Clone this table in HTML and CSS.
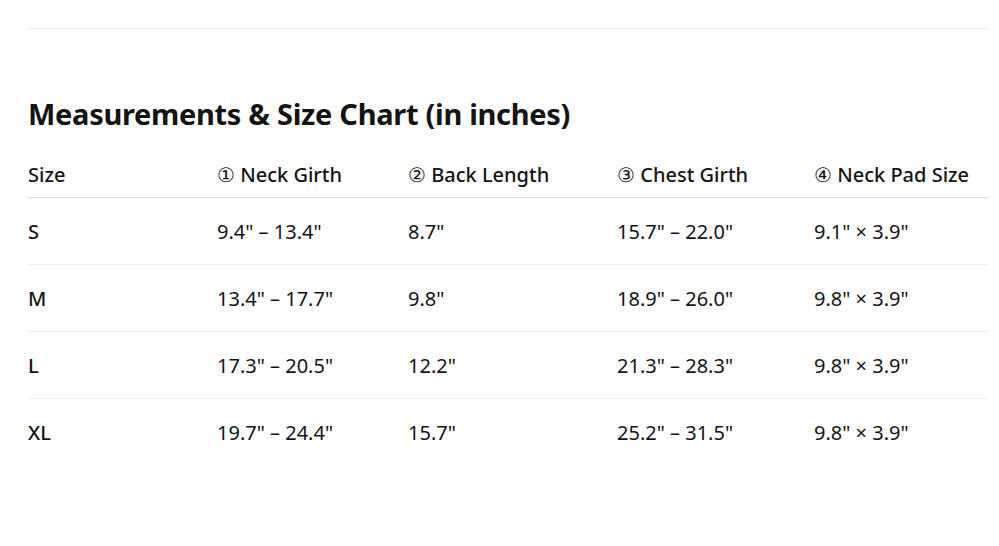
FILE: index.html
```html
<!DOCTYPE html>
<html lang="en">
<head>
<meta charset="utf-8">
<title>Measurements &amp; Size Chart</title>
<link rel="stylesheet" href="styles.css">
</head>
<body>
<main class="page">
  <hr class="divider">
  <h1 class="title">Measurements &amp; Size Chart (in inches)</h1>
  <table class="chart">
    <colgroup>
      <col class="c-size"><col class="c-neck"><col class="c-back"><col class="c-chest"><col class="c-pad">
    </colgroup>
    <thead>
      <tr>
        <th>Size</th>
        <th>&#x2460; Neck Girth</th>
        <th>&#x2461; Back Length</th>
        <th>&#x2462; Chest Girth</th>
        <th>&#x2463; Neck Pad Size</th>
      </tr>
    </thead>
    <tbody>
      <tr><td class="size">S</td><td>9.4" – 13.4"</td><td>8.7"</td><td>15.7" – 22.0"</td><td>9.1" × 3.9"</td></tr>
      <tr><td class="size">M</td><td>13.4" – 17.7"</td><td>9.8"</td><td>18.9" – 26.0"</td><td>9.8" × 3.9"</td></tr>
      <tr><td class="size">L</td><td>17.3" – 20.5"</td><td>12.2"</td><td>21.3" – 28.3"</td><td>9.8" × 3.9"</td></tr>
      <tr><td class="size">XL</td><td>19.7" – 24.4"</td><td>15.7"</td><td>25.2" – 31.5"</td><td>9.8" × 3.9"</td></tr>
    </tbody>
  </table>
</main>
</body>
</html>
```
FILE: styles.css
```css
* { box-sizing: border-box; }
html, body { margin: 0; background: #fff; }
body {
  font-family: "Noto Sans", "Open Sans", sans-serif;
  color: #141414;
}
.page {
  width: 960px;
  margin-left: 28px;
  padding-top: 28px;
}
.divider {
  margin: 0;
  border: 0;
  border-top: 1px solid #eeeeee;
}
.title {
  margin: 65px 0 0;
  font-size: 29px;
  font-weight: 700;
  line-height: 40px;
  letter-spacing: -0.3px;
}
.chart {
  width: 960px;
  margin-top: 17px;
  border-collapse: collapse;
  table-layout: fixed;
}
.c-size { width: 189px; }
.c-neck { width: 191px; }
.c-back { width: 209px; }
.c-chest { width: 197px; }
.c-pad { width: 174px; }
.chart th {
  text-align: left;
  font-weight: 500;
  font-size: 20px;
  line-height: 28px;
  padding: 10px 0 8px;
  border-bottom: 1px solid #dddddd;
  white-space: nowrap;
}
.chart td {
  font-size: 20px;
  line-height: 28px;
  padding: 20px 0 18px;
  font-weight: 400;
  border-bottom: 1px solid #eeeeee;
  white-space: nowrap;
}
.chart tbody tr:last-child td { border-bottom: 0; }
.chart td.size { font-weight: 500; }
```
